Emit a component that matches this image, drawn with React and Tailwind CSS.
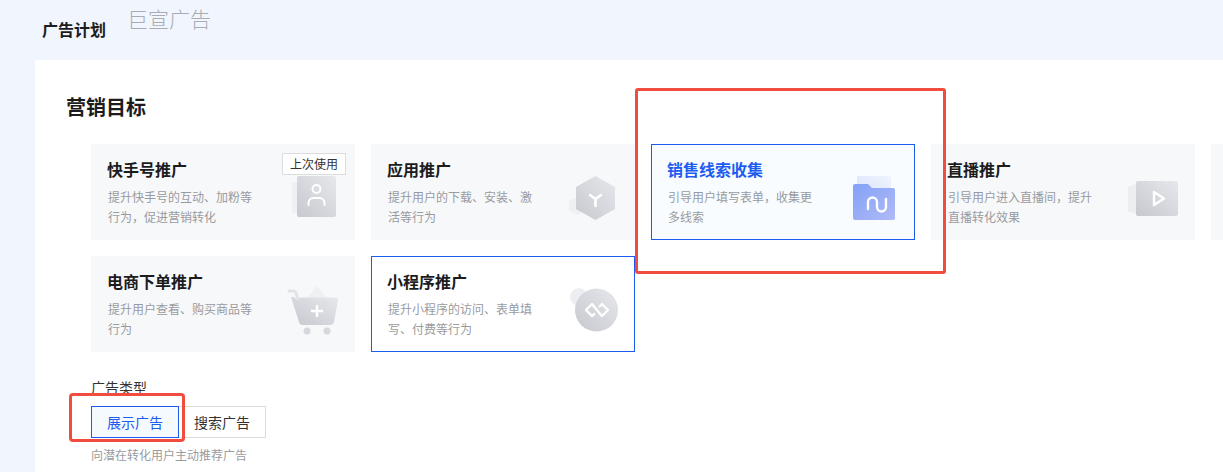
function Defs({ id = "g" }) {
  return (
    <defs>
      <linearGradient id={id} x1="1" y1="0" x2="0" y2="1">
        <stop offset="0" stopColor="#e6e8ec" />
        <stop offset="1" stopColor="#c6c8ce" />
      </linearGradient>
      <linearGradient id={id + "b"} x1="1" y1="1" x2="0" y2="0">
        <stop offset="0" stopColor="#b0b9f6" />
        <stop offset="1" stopColor="#83a2f7" />
      </linearGradient>
      <linearGradient id={id + "c"} x1="1" y1="0" x2="0" y2="1">
        <stop offset="0" stopColor="#f0f4fe" />
        <stop offset="1" stopColor="#d8e2fc" />
      </linearGradient>
    </defs>
  );
}

const Box = ({ children, id }) => (
  <svg width="60" height="60" viewBox="0 0 60 60" fill="none" className="shrink-0 mt-[15px]">
    <Defs id={id} />
    {children}
  </svg>
);

const icons = {
  user: (
    <Box id="u">
      <rect x="13" y="10" width="8" height="31" rx="2" fill="#eff0f3" />
      <rect x="18" y="4" width="39" height="41" rx="2" fill="url(#u)" />
      <circle cx="37.5" cy="17" r="4" stroke="#fff" strokeWidth="2" />
      <path d="M29.5 33 v-2 a5 5 0 0 1 5 -5 h6 a5 5 0 0 1 5 5 v2" stroke="#fff" strokeWidth="2" strokeLinecap="round" />
    </Box>
  ),
  hex: (
    <Box id="h">
      <path d="M18 25 l8 4.5 v9 l-8 4.5 l-8 -4.5 v-9 z" fill="#eff0f3" />
      <path d="M36.5 4 L56 15 V37 L36.5 48 L17 37 V15 Z" fill="url(#h)" />
      <path d="M36.5 27 v7 M36.5 27 l-5.5 -4 M36.5 27 l5.5 -4" stroke="#fff" strokeWidth="2.6" strokeLinecap="round" />
    </Box>
  ),
  folder: (
    <Box id="f">
      <rect x="18" y="4" width="34" height="20" fill="url(#fc)" />
      <path d="M14 14 a2 2 0 0 1 2 -2 h13 l4 4 h21 a2 2 0 0 1 2 2 v28 a2 2 0 0 1 -2 2 h-38 a2 2 0 0 1 -2 -2 z" fill="url(#fb)" />
      <path d="M29 37 v-7 a4.5 4.5 0 0 1 9 0 v5 a4.5 4.5 0 0 0 9 0 v-8" stroke="#fff" strokeWidth="2.4" strokeLinecap="round" />
    </Box>
  ),
  video: (
    <Box id="v">
      <path d="M9 15 L17 12 V42 L9 39 Z" fill="#eceef1" />
      <rect x="17" y="9" width="42" height="35" rx="2" fill="url(#v)" />
      <path d="M35 20 L45 26.5 L35 33 Z" stroke="#fff" strokeWidth="2.4" strokeLinejoin="round" />
    </Box>
  ),
  cart: (
    <Box id="c">
      <path d="M28 14 L38 2 L48 14 Z" fill="#eff0f3" />
      <path d="M12 13 h2 a3 3 0 0 1 3 2 l1 -1.5 h39 a2 2 0 0 1 2 2.5 l-4 22 a4 4 0 0 1 -4 3 h-27 a4 4 0 0 1 -4 -3 z" fill="url(#c)" />
      <path d="M10 7 h4 a3 3 0 0 1 3 2 l2 6" stroke="#e2e3e7" strokeWidth="3" strokeLinecap="round" />
      <path d="M38 21 v12 M32 27 h12" stroke="#fff" strokeWidth="2.4" />
      <circle cx="28" cy="47" r="3.5" fill="#d6d8dd" />
      <circle cx="48" cy="47" r="3.5" fill="#d6d8dd" />
    </Box>
  ),
  mini: (
    <Box id="m">
      <circle cx="20" cy="13" r="9" fill="#eceef1" />
      <circle cx="37.5" cy="26" r="21.5" fill="url(#m)" />
      <path d="M36 29.5 L33 32 L27 26 L33 20 L42 31 L43 32 L49 26 L43 20 L40 23" stroke="#fff" strokeWidth="2.4" strokeLinejoin="round" />
    </Box>
  ),
};

const cards = [
  { t: "快手号推广", d: "提升快手号的互动、加粉等行为\uFF0C促进营销转化", i: "user", badge: true },
  { t: "应用推广", d: "提升用户的下载、安装、激活等行为", i: "hex" },
  { t: "销售线索收集", d: "引导用户填写表单\uFF0C收集更多线索", i: "folder", active: true },
  { t: "直播推广", d: "引导用户进入直播间\uFF0C提升直播转化效果", i: "video" },
  { t: "", d: "", i: null },
  { t: "电商下单推广", d: "提升用户查看、购买商品等行为", i: "cart" },
  { t: "小程序推广", d: "提升小程序的访问、表单填写、付费等行为", i: "mini", outline: true },
];

function Card({ t, d, i, badge, active, outline }) {
  const skin = active
    ? "bg-[#f8fcff] border border-[#1d5cf0]"
    : outline
      ? "bg-white border border-[#1d5cf0]"
      : "bg-[#f7f8fa] border border-[#f7f8fa]";
  return (
    <div className={`relative h-[96px] flex justify-between pl-[15px] pr-[15px] pt-[12px] ${skin}`}>
      <div className="w-[150px]">
        <div className={`text-[16px] leading-[24px] font-bold ${active ? "text-[#1d5cf0]" : "text-[#1c1c1c]"}`}>{t}</div>
        <div className="mt-[6px] ml-[1px] text-[12px] leading-[20px] text-[#999ba0]">{d}</div>
      </div>
      {i && icons[i]}
      {badge && (
        <div className="absolute top-[8px] right-[8px] w-[64px] h-[22px] flex items-center justify-center bg-white border border-[#dcdcdc] text-[12px] text-[#333]">
          上次使用
        </div>
      )}
    </div>
  );
}

export default function App() {
  return (
    <div
      className="relative w-[1223px] h-[472px] overflow-hidden bg-[#f1f5fd] text-[#1c1c1c]"
      style={{ fontFamily: '"Noto Sans CJK SC", "Noto Sans", sans-serif' }}
    >
      <header className="h-[60px] flex pl-[42px]">
        <div className="mt-[17px] text-[16px] leading-[24px] font-bold">广告计划</div>
        <div className="ml-[21px] mt-[3px] text-[21px] leading-[30px] font-light text-[#a9acb1]">巨宣广告</div>
      </header>

      <main className="ml-[35px] h-[412px] bg-white rounded-tl-[3px] pl-[31px] pt-[33px]">
        <h1 className="text-[20px] leading-[28px] font-bold text-[#1c1c1c]">营销目标</h1>
        <div className="mt-[23px] ml-[25px] grid grid-cols-[repeat(5,264px)] gap-[16px]">
          {cards.map((c, k) => (
            <Card key={k} {...c} />
          ))}
        </div>
        <div className="ml-[25px] mt-[25px]">
          <div className="text-[14px] leading-[20px] text-[#333]">广告类型</div>
          <div className="mt-[9px] flex">
            <div className="w-[88px] h-[32px] flex items-center justify-center text-[14px] text-[#1d5cf0] bg-[#f5faff] border border-[#1d5cf0]">展示广告</div>
            <div className="w-[87px] h-[32px] flex items-center justify-center text-[14px] text-[#333] border border-l-0 border-[#dcdcdc]">搜索广告</div>
          </div>
          <div className="mt-[7px] text-[12px] leading-[20px] text-[#999ba0]">向潜在转化用户主动推荐广告</div>
        </div>
      </main>

      <div className="absolute left-[635px] top-[88px] w-[311px] h-[186px] border-[3px] border-[#f04c40] rounded-[3px]" />
      <div className="absolute left-[69px] top-[393px] w-[116px] h-[49px] border-[3px] border-[#f04c40] rounded-[4px]" />
    </div>
  );
}
